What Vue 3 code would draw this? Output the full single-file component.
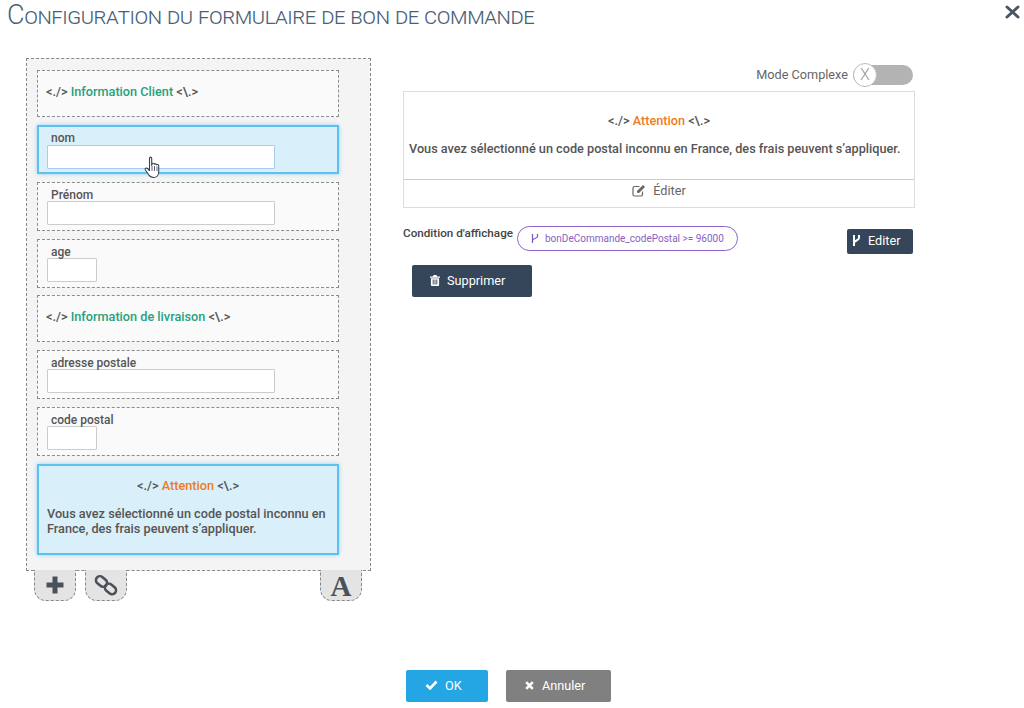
<script setup>
const fields = [
  { type: 'head', label: 'Information Client' },
  { type: 'field', label: 'nom', size: 'long', active: true },
  { type: 'field', label: 'Prénom', size: 'long' },
  { type: 'field', label: 'age', size: 'short' },
  { type: 'head', label: 'Information de livraison' },
  { type: 'field', label: 'adresse postale', size: 'long' },
  { type: 'field', label: 'code postal', size: 'short' },
]
</script>

<template>
  <div class="page">
    <header class="top">
      <h1 class="title">Configuration du formulaire de bon de commande</h1>
      <svg class="close" width="15" height="14" viewBox="0 0 15 14"><path d="M2 2 13 12M13 2 2 12" stroke="#4b5563" stroke-width="3" stroke-linecap="round"/></svg>
    </header>

    <main class="body">
      <section class="left">
        <div class="panel">
          <template v-for="f in fields" :key="f.label">
            <div v-if="f.type === 'head'" class="row head">
              &lt;./&gt; <span class="green">{{ f.label }}</span> &lt;\.&gt;
            </div>
            <div v-else class="row field" :class="{ active: f.active }">
              <label class="lbl">{{ f.label }}</label>
              <div class="input" :class="f.size"></div>
              <svg v-if="f.active" class="cursor" width="18" height="24" viewBox="0 0 18 24">
                <path d="M5.500 2.200c0-1.500 2.200-1.500 2.200 0v7.200l.6-2c1.400-.5 2 .2 2 .9.6-.8 2-.6 2.200.5.8-.6 2.200-.3 2.200 1v6.200c0 3-2 5.500-5 5.500-2.500 0-4-1-5.200-3L1.400 14c-.8-1.300.8-2.800 2.100-1.500l2 2z" fill="#fff" stroke="#3a4250" stroke-width="1.100" stroke-linejoin="round"/>
                <path d="M8 10v5M10.500 10v5M13 10.500v4.500" stroke="#3a4250" stroke-width=".8"/>
              </svg>
            </div>
          </template>
          <div class="row note active">
            <div class="note-title">&lt;./&gt; <span class="orange">Attention</span> &lt;\.&gt;</div>
            <p class="note-text">Vous avez sélectionné un code postal inconnu en France, des frais peuvent s’appliquer.</p>
          </div>
        </div>
        <div class="tabs">
          <div class="tab">
            <svg width="22" height="22" viewBox="0 0 22 22"><path d="M8.500 2.500h5v6h6v5h-6v6h-5v-6h-6v-5h6z" fill="#4b5158"/></svg>
          </div>
          <div class="tab">
            <svg width="24" height="24" viewBox="0 0 24 24" fill="none" stroke="#4b5158" stroke-width="2.600"><rect x="1.500" y="4.500" width="12" height="8" rx="4" transform="rotate(40 7.500 8.500)"/><rect x="10.500" y="12" width="12" height="8" rx="4" transform="rotate(40 16.500 16)"/></svg>
          </div>
          <div class="tab tab-a">A</div>
        </div>
      </section>

      <section class="right">
        <div class="mode">
          <span class="mode-label">Mode Complexe</span>
          <span class="switch"><span class="knob">X</span></span>
        </div>
        <div class="card">
          <div class="card-main">
            <div class="card-title">&lt;./&gt; <span class="orange">Attention</span> &lt;\.&gt;</div>
            <p class="card-text">Vous avez sélectionné un code postal inconnu en France, des frais peuvent s’appliquer.</p>
          </div>
          <div class="card-edit">
            <svg width="14" height="13" viewBox="0 0 14 13" fill="none" stroke="#666" stroke-width="1.200"><path d="M10.500 7.500v3a1.500 1.500 0 0 1-1.500 1.500H2.500A1.500 1.500 0 0 1 1 10.500V4a1.500 1.500 0 0 1 1.500-1.500h5"/><path d="M5 8.800V7l6-6 2 2-6 6z" fill="#666" stroke="none"/></svg>
            <span>Éditer</span>
          </div>
        </div>
        <div class="cond">
          <span class="cond-label">Condition d'affichage</span>
          <span class="pill">
            <svg width="8" height="11" viewBox="0 0 8 11" fill="none" stroke="#7e57c2" stroke-width="1.300"><path d="M1.500 1v9M6.500 1v2.500c0 2-5 2-5 4"/></svg>
            bonDeCommande_codePostal &gt;= 96000
          </span>
          <button class="btn dark edit-btn">
            <svg width="9" height="13" viewBox="0 0 9 13" fill="none" stroke="#fff" stroke-width="2"><path d="M2 1v11M7 1v3c0 2.500-5 2.500-5 5"/></svg>
            Editer
          </button>
        </div>
        <button class="btn dark del-btn">
          <svg width="10" height="11" viewBox="0 0 11 12"><path d="M4 0h3l1 1.500h3V3H0V1.500h3zM1 3.500h9V11a1 1 0 0 1-1 1H2a1 1 0 0 1-1-1zM3 5v5.500h1V5zM5 5v5.500h1V5zM7 5v5.500h1V5z" fill="#fff" fill-rule="evenodd"/></svg>
          Supprimer
        </button>
      </section>
    </main>

    <footer class="foot">
      <button class="btn ok">
        <svg width="13" height="10" viewBox="0 0 13 10"><path d="M1.500 5 5 8.500 11.500 1.500" fill="none" stroke="#fff" stroke-width="2.600"/></svg>
        OK
      </button>
      <button class="btn cancel">
        <svg width="9" height="9" viewBox="0 0 9 9"><path d="M1.200 1.200 7.800 7.800M7.800 1.200 1.200 7.800" stroke="#fff" stroke-width="2.600"/></svg>
        Annuler
      </button>
    </footer>
  </div>
</template>

<style scoped>
.page {
  width: 1024px;
  height: 708px;
  display: flex;
  flex-direction: column;
  background: #fff;
  font-family: Roboto, "Liberation Sans", sans-serif;
  color: #555;
  overflow: hidden;
}
.top {
  display: flex;
  justify-content: space-between;
  padding: 1px 4px 0 7px;
  height: 58px;
  box-sizing: border-box;
}
.title {
  margin: 0;
  font-size: 23.5px;
  line-height: 28px;
  font-weight: 300;
  font-variant: small-caps;
  letter-spacing: -0.41px;
  color: #4a5f78;
}
.title::first-letter { font-size: 27px; }
.close { margin-top: 4px; }
.body {
  display: flex;
  gap: 32px;
  padding-left: 26px;
}
.left { width: 345px; }
.panel {
  box-sizing: border-box;
  width: 345px;
  height: 513px;
  padding: 11px 31px 0 10px;
  border: 1px dashed #888;
  background: #f4f4f4;
  display: flex;
  flex-direction: column;
  gap: 7.85px;
}
.row {
  box-sizing: border-box;
  border: 1px dashed #8c8c8c;
  background: #fafafa;
  position: relative;
  flex: none;
}
.head {
  height: 47px;
  padding: 13px 8px;
  font-size: 12.7px;
  line-height: 16px;
  font-weight: 500;
  color: #555;
}
.green { color: #26a17f; }
.orange { color: #ee7b22; }
.field { height: 49px; padding: 0 9px; }
.row.active {
  border: 2px solid #5fbfee;
  background: #d9eff9;
  box-shadow: 0 0 4px #8fd3f4;
}
.field.active { padding: 0 8px; }
.lbl {
  display: block;
  padding-left: 4px;
  font-size: 12px;
  font-weight: 500;
  line-height: 14px;
  padding-top: 5px;
  height: 18px;
  box-sizing: border-box;
  color: #555;
}
.field.active .lbl { padding-top: 4px; }
.input {
  box-sizing: border-box;
  height: 24px;
  background: #fff;
  border: 1px solid #ccc;
  border-radius: 1px;
}
.field.active .input { border-color: #a9cdf0; }
.input.long { width: 228px; }
.input.short { width: 50px; }
.cursor {
  position: absolute;
  left: 105px;
  top: 29px;
}
.note {
  height: 91px;
  padding: 12px 8px 0;
  font-size: 12.7px;
  font-weight: 500;
}
.note-title {
  text-align: center;
  line-height: 16px;
}
.note-text {
  margin: 12px 0 0;
  line-height: 15px;
  color: #555;
}
.tabs {
  display: flex;
  gap: 9px;
  padding: 0 9px 0 8px;
}
.tab {
  box-sizing: border-box;
  width: 42px;
  height: 31px;
  margin-top: -1px;
  border: 1px dashed #888;
  border-top: 0;
  border-radius: 0 0 12px 12px;
  background: #e4e4e4;
  display: flex;
  align-items: center;
  justify-content: center;
}
.tab-a {
  margin-left: auto;
  font-family: "Liberation Serif", serif;
  font-size: 29px;
  font-weight: 700;
  color: #4b5158;
  line-height: 30px;
  padding-top: 2px;
}
.right {
  width: 512px;
  display: flex;
  flex-direction: column;
}
.mode {
  display: flex;
  align-items: center;
  justify-content: flex-end;
  gap: 5px;
  padding-right: 2px;
  height: 33px;
  font-size: 12.7px;
  color: #666;
}
.switch {
  position: relative;
  width: 60px;
  height: 20px;
  border-radius: 10px;
  background: #b3b3b3;
}
.knob {
  position: absolute;
  left: 0;
  top: -2px;
  box-sizing: border-box;
  width: 24px;
  height: 24px;
  border-radius: 50%;
  background: #fff;
  border: 1px solid #bbb;
  text-align: center;
  font-size: 16px;
  line-height: 22px;
  font-weight: 300;
  color: #999;
}
.card {
  box-sizing: border-box;
  height: 117px;
  border: 1px solid #ddd;
}
.card-main {
  height: 88px;
  box-sizing: border-box;
  padding-top: 21px;
  border-bottom: 1px solid #ccc;
  font-size: 12.7px;
  font-weight: 500;
  text-align: center;
}
.card-title { line-height: 16px; }
.card-text {
  margin: 12px 0 0;
  padding: 0 9px 0 5px;
  text-align: left;
  line-height: 15px;
  color: #555;
  white-space: nowrap;
}
.card-edit {
  height: 20px;
  display: flex;
  align-items: center;
  justify-content: center;
  gap: 7px;
  font-size: 12.7px;
  color: #666;
}
.cond {
  display: flex;
  align-items: flex-start;
  margin-top: 18px;
  height: 39px;
}
.cond-label {
  font-size: 11.7px;
  font-weight: 500;
  line-height: 14px;
  color: #444;
  width: 114px;
  flex: none;
  white-space: nowrap;
}
.pill {
  box-sizing: border-box;
  width: 221px;
  height: 25px;
  flex: none;
  border: 1px solid #8e63c8;
  border-radius: 13px;
  display: flex;
  align-items: center;
  gap: 6px;
  padding-left: 13px;
  font-size: 10px;
  color: #8860c4;
  white-space: nowrap;
}
.btn {
  font-family: inherit;
  border: 0;
  color: #fff;
  font-size: 12.7px;
  font-weight: 400;
  border-radius: 2px;
  display: flex;
  align-items: center;
  gap: 7px;
  padding: 0;
  box-sizing: border-box;
}
.dark { background: #35465a; }
.edit-btn {
  width: 66px;
  height: 25px;
  margin: 3px 0 0 109px;
  padding: 0 0 2px 5px;
  flex: none;
}
.del-btn {
  width: 120px;
  height: 32px;
  margin-left: 9px;
  padding: 0 0 2px 18px;
}
.foot {
  margin-top: auto;
  display: flex;
  gap: 18px;
  padding: 0 0 6px 406px;
}
.ok {
  width: 82px;
  height: 32px;
  background: #23a6e3;
  padding: 0 0 2px 19px;
  gap: 7px;
}
.cancel {
  width: 105px;
  height: 32px;
  background: #808080;
  padding: 0 0 2px 19px;
  gap: 8px;
}
</style>
